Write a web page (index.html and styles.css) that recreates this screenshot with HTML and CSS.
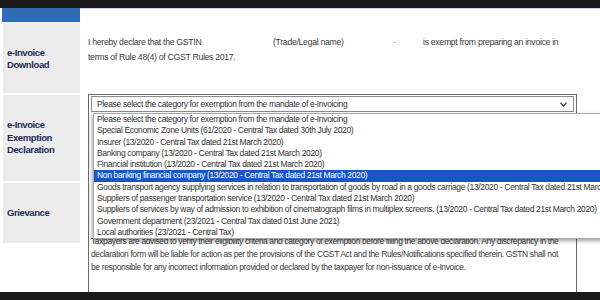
FILE: index.html
```html
<!DOCTYPE html>
<html>
<head>
	<title>e-Invoice Exemption Declaration</title>
	<link rel="stylesheet" href="styles.css">
</head>
<body>
	<div class="topbar"></div>
	<div class="frame">
		<div class="sidebar">
			<div class="side-head"></div>
			<div class="side-item item-download">e-Invoice<br>Download</div>
			<div class="side-item item-exemption">e-Invoice<br>Exemption<br>Declaration</div>
			<div class="side-item item-grievance">Grievance</div>
		</div>

		<div class="content">
			<div class="intro">
				<div class="intro-row">
					<span class="txt-gstin">I hereby declare that the GSTIN</span>
					<span class="txt-name">(Trade/Legal name)</span>
					<span class="txt-dash">-</span>
					<span>is exempt from preparing an invoice in</span>
				</div>
				<div>terms of Rule 48(4) of CGST Rules 2017.</div>
			</div>

			<div class="decl-panel">
				<div class="select">
					<span>Please select the category for exemption from the mandate of e-Invoicing</span>
					<svg class="arrow" width="7" height="5" viewBox="0 0 7 5"><path d="M0.5 0.8 L3.5 4 L6.5 0.8" fill="none" stroke="#444" stroke-width="1.3"/></svg>
				</div>

				<ul class="select-list">
					<li>Please select the category for exemption from the mandate of e-Invoicing</li>
					<li>Special Economic Zone Units (61/2020 - Central Tax dated 30th July 2020)</li>
					<li>Insurer (13/2020 - Central Tax dated 21st March 2020)</li>
					<li>Banking company (13/2020 - Central Tax dated 21st March 2020)</li>
					<li>Financial institution (13/2020 - Central Tax dated 21st March 2020)</li>
					<li class="selected">Non banking financial company (13/2020 - Central Tax dated 21st March 2020)</li>
					<li>Goods transport agency supplying services in relation to transportation of goods by road in a goods carriage (13/2020 - Central Tax dated 21st March 2020)</li>
					<li>Suppliers of passenger transportation service (13/2020 - Central Tax dated 21st March 2020)</li>
					<li>Suppliers of services by way of admission to exhibition of cinematograph films in multiplex screens. (13/2020 - Central Tax dated 21st March 2020)</li>
					<li>Government department (23/2021 - Central Tax dated 01st June 2021)</li>
					<li>Local authorities (23/2021 - Central Tax)</li>
				</ul>

				<p class="notice">
					Taxpayers are advised to verify their eligibility criteria and category of exemption before filling the above declaration. Any discrepancy in the<br>
					declaration form will be liable for action as per the provisions of the CGST Act and the Rules/Notifications specified therein. GSTN shall not<br>
					be responsible for any incorrect information provided or declared by the taxpayer for non-issuance of e-Invoice.
				</p>
			</div>
		</div>
	</div>
	<div class="bottombar"></div>
</body>
</html>
```

FILE: styles.css
```css
body {
	font-family: 'Liberation Sans', Arial, sans-serif;
	background-color: #fff;
	color: #3a3a3a;
	margin: 0;
	padding: 0;
	width: 600px;
	height: 300px;
	overflow: hidden;
}

.topbar,
.bottombar {
	height: 8px;
	background-color: #1b1919;
}

.frame {
	display: flex;
	height: 284px;
}

/* left menu */
.sidebar {
	width: 78px;
	padding-left: 2px;
	display: flex;
	flex-direction: column;
	gap: 2px;
}

.side-head {
	height: 14px;
	margin-bottom: -2px;
	background-color: #2f6cb3;
}

.side-item {
	display: flex;
	align-items: center;
	margin-left: 1px;
	padding-left: 4px;
	background-color: #ececec;
	color: #1d2a58;
	font-weight: bold;
	font-size: 9.5px;
	letter-spacing: -0.4px;
	line-height: 12.5px;
}

.item-download {
	height: 71px;
	padding-top: 3px;
	box-sizing: border-box;
}

.item-exemption {
	height: 86px;
}

.item-grievance {
	height: 60px;
}

/* main area */
.content {
	flex: 1;
	display: flex;
	flex-direction: column;
	padding-left: 8px;
	border-top: 1px solid #c4d5ec;
}

.intro {
	padding-top: 26px;
	font-size: 8.7px;
	letter-spacing: -0.3px;
	line-height: 15px;
	white-space: nowrap;
}

.intro-row {
	display: flex;
}

.txt-gstin {
	width: 185px;
}

.txt-name {
	width: 120px;
}

.txt-dash {
	width: 30px;
	color: #999;
}

.decl-panel {
	position: relative;
	flex: 1;
	width: 489px;
	box-sizing: border-box;
	margin-top: 29px;
	padding: 1px 2px 0 2px;
	border: 1px solid #6a6a6a;
	border-bottom: none;
}

.select {
	display: flex;
	align-items: center;
	justify-content: space-between;
	height: 16px;
	box-sizing: border-box;
	padding: 0 6px 0 5px;
	border: 1px solid #8c8c8c;
	font-size: 8.5px;
	letter-spacing: -0.35px;
	color: #333;
	white-space: nowrap;
}

.arrow {
	margin-top: 1px;
}

.select-list {
	position: absolute;
	left: 4px;
	top: 18px;
	width: 560px;
	margin: 0;
	padding: 0;
	list-style: none;
	background-color: #fff;
	border: 1px solid #a9a9a9;
	box-shadow: -1px 2px 4px rgba(0, 0, 0, 0.35);
	font-size: 8.5px;
	letter-spacing: -0.35px;
	color: #333;
	white-space: nowrap;
}

.select-list li {
	height: 11.3px;
	line-height: 11.3px;
	padding-left: 3px;
}

.select-list li.selected {
	background-color: #1a55c6;
	color: #fff;
}

.notice {
	margin: 123px 0 0 0;
	font-size: 8.5px;
	letter-spacing: -0.38px;
	line-height: 13px;
	white-space: nowrap;
}
```
